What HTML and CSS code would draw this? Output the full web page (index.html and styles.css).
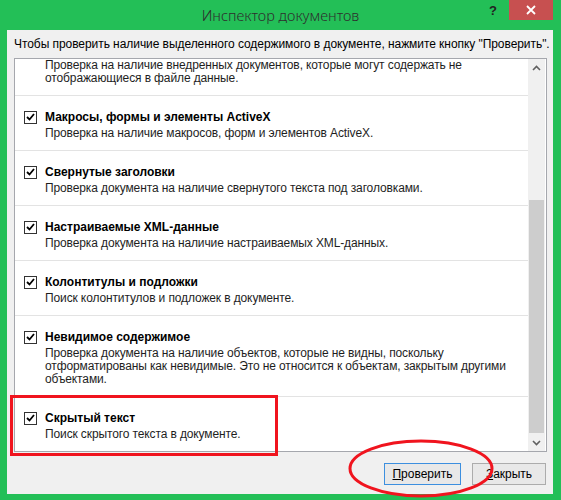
FILE: index.html
```html
<!DOCTYPE html>
<html lang="ru">
<head>
<meta charset="utf-8">
<title>Инспектор документов</title>
<link rel="stylesheet" href="styles.css">
</head>
<body>
<div class="window">
  <div class="titlebar">
    <div></div>
    <div class="title">Инспектор документов</div>
    <div class="controls">
      <span class="help">?</span>
      <span class="close"><svg width="10" height="10" viewBox="0 0 10 10"><path d="M1 1L9 9M9 1L1 9" stroke="#fff" stroke-width="1.8"/></svg></span>
    </div>
  </div>
  <div class="client">
    <p class="intro">Чтобы проверить наличие выделенного содержимого в документе, нажмите кнопку "Проверить".</p>
    <div class="listbox">
      <div class="items">
        <div class="row first">
          <div class="desc">Проверка на наличие внедренных документов, которые могут содержать не<br>отображающиеся в файле данные.</div>
        </div>
        <div class="row">
          <div class="head"><span class="cb"><svg width="9" height="8" viewBox="0 0 9 8"><path d="M1 4L3.5 6.5L8 1" fill="none" stroke="#000" stroke-width="1.8"/></svg></span><span class="name">Макросы, формы и элементы ActiveX</span></div>
          <div class="desc">Проверка на наличие макросов, форм и элементов ActiveX.</div>
        </div>
        <div class="row">
          <div class="head"><span class="cb"><svg width="9" height="8" viewBox="0 0 9 8"><path d="M1 4L3.5 6.5L8 1" fill="none" stroke="#000" stroke-width="1.8"/></svg></span><span class="name">Свернутые заголовки</span></div>
          <div class="desc">Проверка документа на наличие свернутого текста под заголовками.</div>
        </div>
        <div class="row">
          <div class="head"><span class="cb"><svg width="9" height="8" viewBox="0 0 9 8"><path d="M1 4L3.5 6.5L8 1" fill="none" stroke="#000" stroke-width="1.8"/></svg></span><span class="name">Настраиваемые XML-данные</span></div>
          <div class="desc">Проверка документа на наличие настраиваемых XML-данных.</div>
        </div>
        <div class="row">
          <div class="head"><span class="cb"><svg width="9" height="8" viewBox="0 0 9 8"><path d="M1 4L3.5 6.5L8 1" fill="none" stroke="#000" stroke-width="1.8"/></svg></span><span class="name">Колонтитулы и подложки</span></div>
          <div class="desc">Поиск колонтитулов и подложек в документе.</div>
        </div>
        <div class="row">
          <div class="head"><span class="cb"><svg width="9" height="8" viewBox="0 0 9 8"><path d="M1 4L3.5 6.5L8 1" fill="none" stroke="#000" stroke-width="1.8"/></svg></span><span class="name">Невидимое содержимое</span></div>
          <div class="desc">Проверка документа на наличие объектов, которые не видны, поскольку<br>отформатированы как невидимые. Это не относится к объектам, закрытым другими<br>объектами.</div>
        </div>
        <div class="row">
          <div class="head"><span class="cb"><svg width="9" height="8" viewBox="0 0 9 8"><path d="M1 4L3.5 6.5L8 1" fill="none" stroke="#000" stroke-width="1.8"/></svg></span><span class="name">Скрытый текст</span></div>
          <div class="desc">Поиск скрытого текста в документе.</div>
        </div>
      </div>
      <div class="scrollbar">
        <div class="arrow"><svg width="9" height="6" viewBox="0 0 9 6"><path d="M1 5L4.5 1.5L8 5" fill="none" stroke="#606060" stroke-width="1.6"/></svg></div>
        <div class="track"><div class="thumb"></div></div>
        <div class="arrow"><svg width="9" height="6" viewBox="0 0 9 6"><path d="M1 1L4.5 4.5L8 1" fill="none" stroke="#606060" stroke-width="1.6"/></svg></div>
      </div>
    </div>
    <div class="buttons">
      <button class="btn default"><u>П</u>роверить</button>
      <button class="btn"><u>З</u>акрыть</button>
    </div>
  </div>
  <svg class="annot" width="561" height="500" viewBox="0 0 561 500">
    <rect x="11.5" y="396.5" width="265" height="58" fill="none" stroke="#f0141e" stroke-width="3"/>
    <ellipse cx="421" cy="468.5" rx="71" ry="27.5" fill="none" stroke="#f0141e" stroke-width="3"/>
  </svg>
</div>
</body>
</html>
```
FILE: styles.css
```css
* { box-sizing: border-box; }
html, body { margin: 0; padding: 0; }
body {
  width: 561px;
  height: 500px;
  overflow: hidden;
  font-family: "Liberation Sans", Arial, sans-serif;
  font-size: 12px;
  color: #000;
}
.window {
  position: relative;
  width: 561px;
  height: 500px;
  background: #23bf57;
  padding: 0 8px 7px 7px;
  display: flex;
  flex-direction: column;
}
.titlebar {
  height: 30px;
  display: grid;
  grid-template-columns: 1fr auto 1fr;
  margin: 0 -8px 0 -7px;
}
.title {
  font-family: "Noto Sans", "Open Sans", sans-serif;
  font-size: 14.5px;
  font-weight: 300;
  color: #2e2e2e;
  line-height: 30px;
}
.controls {
  display: flex;
  justify-content: flex-end;
  align-items: flex-start;
  padding-right: 8px;
}
.help {
  font-weight: bold;
  font-size: 13px;
  color: #222;
  width: 30px;
  text-align: center;
  line-height: 22px;
  margin-right: 1px;
}
.close {
  width: 44px;
  height: 20px;
  background: #c75050;
  display: flex;
  align-items: center;
  justify-content: center;
}
.client {
  flex: 1;
  background: #f0f0f0;
  padding: 6px 6px 9px 7px;
  display: flex;
  flex-direction: column;
}
.intro {
  margin: 0 0 6px 0;
  line-height: 16px;
  white-space: nowrap;
  letter-spacing: -0.06px;
}
.listbox {
  height: 394px;
  border: 1px solid #a5a7ad;
  background: #fff;
  display: flex;
}
.items {
  flex: 1;
  overflow: hidden;
}
.row {
  border-top: 1px solid #e3e3e3;
  padding: 13px 0 10px 9px;
}
.row.first {
  border-top: none;
  padding-top: 0;
}
.head {
  display: flex;
  align-items: center;
  height: 16px;
}
.cb {
  width: 13px;
  height: 13px;
  border: 1px solid #333;
  background: #fff;
  display: flex;
  align-items: center;
  justify-content: center;
  margin-right: 8px;
}
.name {
  font-weight: bold;
  line-height: 16px;
}
.desc {
  margin: 2px 0 0 21px;
  line-height: 13px;
  color: #1e1e1e;
  white-space: nowrap;
  letter-spacing: -0.12px;
}
.row.first .desc { margin-top: 0; }
.scrollbar {
  width: 17px;
  margin-right: 1px;
  background: #f0f0f0;
  display: flex;
  flex-direction: column;
}
.arrow {
  height: 17px;
  display: flex;
  align-items: center;
  justify-content: center;
}
.track {
  flex: 1;
  padding-top: 124px;
  padding-left: 1px;
  padding-right: 1px;
}
.thumb {
  height: 233px;
  background: #cdcdcd;
}
.buttons {
  margin-top: 11px;
  display: flex;
  justify-content: flex-end;
  gap: 11px;
  padding-right: 1px;
}
.btn {
  height: 22px;
  font-family: inherit;
  font-size: 12px;
  color: #000;
  background: #e8e8e8;
  border: 1px solid #acacac;
  padding: 0;
  width: 74px;
}
.btn.default {
  width: 77px;
  border-color: #3c8fdf;
}
.btn u { text-decoration: underline; }
.annot {
  position: absolute;
  left: 0;
  top: 0;
  pointer-events: none;
}
```
